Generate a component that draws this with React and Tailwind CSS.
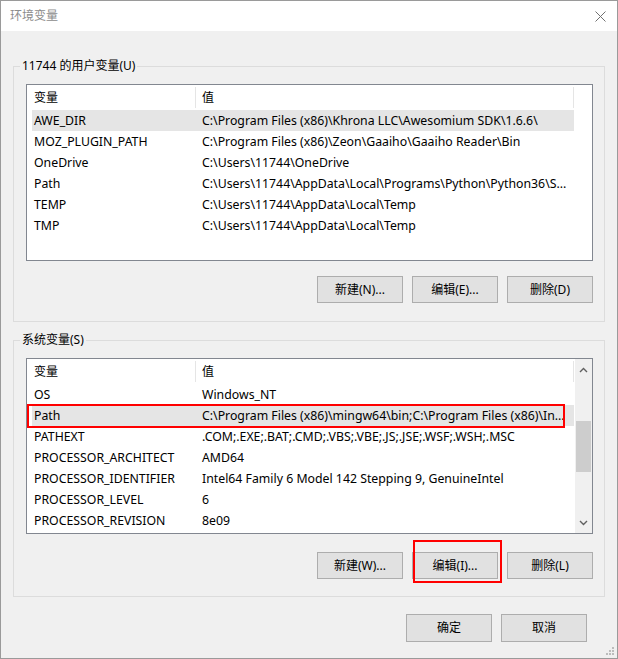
import React from 'react';

const userVars = [
  ['AWE_DIR', 'C:\\Program Files (x86)\\Khrona LLC\\Awesomium SDK\\1.6.6\\'],
  ['MOZ_PLUGIN_PATH', 'C:\\Program Files (x86)\\Zeon\\Gaaiho\\Gaaiho Reader\\Bin'],
  ['OneDrive', 'C:\\Users\\11744\\OneDrive'],
  ['Path', 'C:\\Users\\11744\\AppData\\Local\\Programs\\Python\\Python36\\S...'],
  ['TEMP', 'C:\\Users\\11744\\AppData\\Local\\Temp'],
  ['TMP', 'C:\\Users\\11744\\AppData\\Local\\Temp'],
];

const sysVars = [
  ['OS', 'Windows_NT'],
  ['Path', 'C:\\Program Files (x86)\\mingw64\\bin;C:\\Program Files (x86)\\In...'],
  ['PATHEXT', '.COM;.EXE;.BAT;.CMD;.VBS;.VBE;.JS;.JSE;.WSF;.WSH;.MSC'],
  ['PROCESSOR_ARCHITECT', 'AMD64'],
  ['PROCESSOR_IDENTIFIER', 'Intel64 Family 6 Model 142 Stepping 9, GenuineIntel'],
  ['PROCESSOR_LEVEL', '6'],
  ['PROCESSOR_REVISION', '8e09'],
];

const Btn = ({ children, marked }) => (
  <div className="relative">
    <button className="w-[86px] h-[27px] bg-[#e1e1e1] border border-[#adadad] text-[12px] text-black flex items-center justify-center">
      {children}
    </button>
    {/* red annotation box */}
    {marked && (
      <div className="absolute left-[1px] -top-[12px] w-[89px] h-[43px] border-2 border-[#ff0000]" />
    )}
  </div>
);

const Header = () => (
  <div className="flex h-[25px] items-center bg-white">
    <div className="w-[169px] h-[21px] pl-[7px] flex items-center border-r border-[#e5e5e5]">变量</div>
    <div className="w-[378px] h-[21px] pl-[6px] flex items-center border-r border-[#e5e5e5]">值</div>
  </div>
);

const Row = ({ name, value, selected, marked }) => (
  <div className={`relative ml-[5px] w-[542px] h-[21px] pt-[2px] flex items-center whitespace-nowrap text-[12.3px] ${selected ? 'bg-[#e5e5e5]' : ''}`}>
    <div className="w-[163px] pl-[2px] overflow-hidden">{name}</div>
    <div className="w-[379px] pl-[7px] overflow-hidden">{value}</div>
    {marked && (
      <div className="absolute -left-[5px] -top-[1px] w-[538px] h-[24px] border-2 border-[#ff0000]" />
    )}
  </div>
);

const Chevron = ({ up }) => (
  <svg width="9" height="6" viewBox="0 0 9 6">
    <path d={up ? 'M1 5 L4.5 1.5 L8 5' : 'M1 1 L4.5 4.5 L8 1'} fill="none" stroke="#606060" strokeWidth="1.4" />
  </svg>
);

const Group = ({ label, children }) => (
  <fieldset className="border border-[#dcdcdc] pl-[12px] pr-[11px]">
    <legend className="-ml-[6px] px-[2px] leading-[16px] text-[12px]">{label}</legend>
    {children}
  </fieldset>
);

export default function App() {
  return (
    <div className="w-[618px] h-[659px] flex flex-col border border-[#9a9a9a] bg-[#f0f0f0] text-[12px] text-black font-['Noto_Sans','Noto_Sans_CJK_SC',sans-serif] overflow-hidden">
      {/* title bar */}
      <div className="h-[30px] shrink-0 bg-white flex items-center justify-between pl-[9px] pr-[10px]">
        <span className="text-[12px] text-[#8c8c8c]">环境变量</span>
        <svg width="11" height="11" viewBox="0 0 11 11" className="mr-[1px]">
          <path d="M0.5 0.5 L10.5 10.5 M10.5 0.5 L0.5 10.5" stroke="#707070" strokeWidth="1" />
        </svg>
      </div>

      <div className="flex-1 flex flex-col pl-[12px] pr-[12px] pt-[27px] relative">
        <Group label="11744 的用户变量(U)">
          <div className="mt-[10px] h-[177px] border border-[#828790] bg-white">
            <Header />
            {userVars.map(([n, v], i) => (
              <Row key={n} name={n} value={v} selected={i === 0} />
            ))}
          </div>
          <div className="mt-[15px] pb-[18px] flex justify-end gap-[9px]">
            <Btn>新建(N)...</Btn>
            <Btn>编辑(E)...</Btn>
            <Btn>删除(D)</Btn>
          </div>
        </Group>

        <div className="mt-[10px]">
          <Group label="系统变量(S)">
            <div className="mt-[10px] h-[176px] border border-[#828790] bg-white flex">
              <div className="flex-1">
                <Header />
                {sysVars.map(([n, v], i) => (
                  <Row key={n} name={n} value={v} selected={i === 1} marked={i === 1} />
                ))}
              </div>
              {/* scrollbar */}
              <div className="w-[17px] bg-[#f0f0f0] flex flex-col items-center">
                <div className="h-[21px] flex items-center justify-center"><Chevron up /></div>
                <div className="flex-1 w-full flex flex-col">
                  <div className="h-[41px]" />
                  <div className="h-[51px] bg-[#cdcdcd] mx-[1px]" />
                </div>
                <div className="h-[21px] flex items-center justify-center"><Chevron /></div>
              </div>
            </div>
            <div className="mt-[18px] pb-[17px] flex justify-end gap-[9px]">
              <Btn>新建(W)...</Btn>
              <Btn marked>编辑(I)...</Btn>
              <Btn>删除(L)</Btn>
            </div>
          </Group>
        </div>

        <div className="mt-[17px] mr-[18px] flex justify-end gap-[9px]">
          <button className="w-[86px] h-[28px] bg-[#e1e1e1] border border-[#adadad] text-[12px]">确定</button>
          <button className="w-[86px] h-[28px] bg-[#e1e1e1] border border-[#adadad] text-[12px]">取消</button>
        </div>

        {/* size grip */}
        <svg width="10" height="10" viewBox="0 0 10 10" className="absolute right-[2px] bottom-[2px]">
          <rect x="7" y="1" width="2" height="2" fill="#bcbcbc" />
          <rect x="4" y="4" width="2" height="2" fill="#bcbcbc" />
          <rect x="7" y="4" width="2" height="2" fill="#bcbcbc" />
          <rect x="1" y="7" width="2" height="2" fill="#bcbcbc" />
          <rect x="4" y="7" width="2" height="2" fill="#bcbcbc" />
          <rect x="7" y="7" width="2" height="2" fill="#bcbcbc" />
        </svg>
      </div>
    </div>
  );
}
